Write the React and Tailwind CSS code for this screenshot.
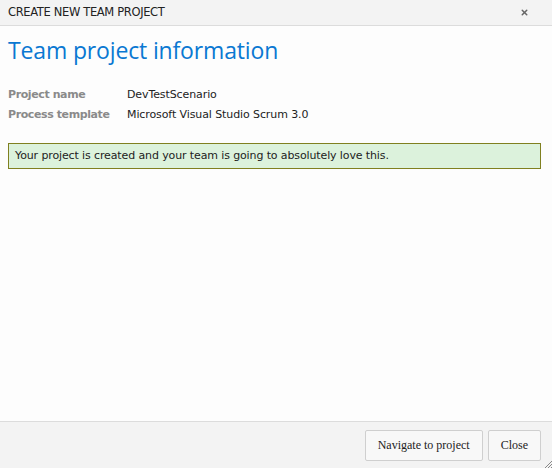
import { X } from "lucide-react";

const ROWS = [
  { label: "Project name", value: "DevTestScenario" },
  { label: "Process template", value: "Microsoft Visual Studio Scrum 3.0" },
];

export default function App() {
  return (
    <div className="w-[552px] h-[468px] flex flex-col bg-[#fdfdfd] font-['DejaVu_Sans',sans-serif] overflow-hidden">
      {/* Title bar */}
      <div className="h-[26px] shrink-0 flex items-center justify-between pl-2 pr-[23px] bg-[#f3f3f3] border-b border-[#dcdcdc]">
        <span className="text-[11.5px] text-[#222] tracking-[-0.35px]">CREATE NEW TEAM PROJECT</span>
        <X className="w-[9px] h-[9px] text-[#666]" strokeWidth={4} />
      </div>

      {/* Body */}
      <div className="flex-1 px-2">
        <h1 className="mt-[9px] text-[23px] leading-[30px] text-[#0a78d2] font-['Open_Sans',sans-serif] tracking-[-0.15px]">
          Team project information
        </h1>

        <div className="mt-[21px] flex flex-col gap-[2px] text-[11px] leading-[18px]">
          {ROWS.map((r) => (
            <div key={r.label} className="flex">
              <span className="w-[119px] shrink-0 font-bold text-[#8a8a8a] tracking-[-0.4px]">{r.label}</span>
              <span className="text-[#222] tracking-[-0.1px]">{r.value}</span>
            </div>
          ))}
        </div>

        <div className="mt-[19px] mr-[3px] h-[26px] flex items-center px-[6px] bg-[#dcf2dc] border border-[#808020] text-[11px] text-[#222] tracking-[-0.12px]">
          Your project is created and your team is going to absolutely love this.
        </div>
      </div>

      {/* Footer */}
      <div className="relative h-[47px] shrink-0 flex items-center justify-end gap-[5px] pr-[11px] bg-[#f3f3f3] border-t border-[#dcdcdc] font-['Liberation_Serif',serif] text-[12px] text-[#222]">
        <button className="h-[31px] px-[12px] bg-[#f8f8f8] border border-[#cfcfcf] rounded-[2px]">
          Navigate to project
        </button>
        <button className="h-[31px] px-[12px] bg-[#f8f8f8] border border-[#cfcfcf] rounded-[2px]">
          Close
        </button>
        <svg className="absolute right-0 bottom-0" width="8" height="8" viewBox="0 0 8 8">
          <path d="M8 1 L1 8 M8 4 L4 8 M8 7 L7 8" stroke="#888" strokeWidth="1" />
        </svg>
      </div>
    </div>
  );
}
